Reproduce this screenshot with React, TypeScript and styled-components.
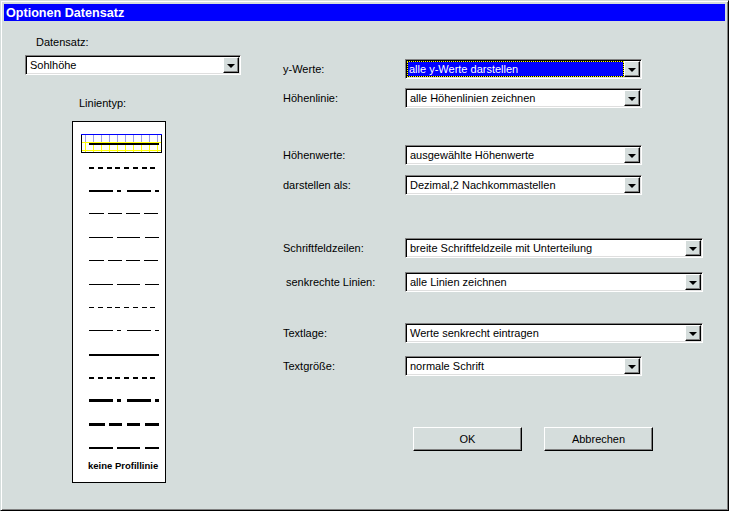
import React from "react";
import styled, { createGlobalStyle } from "styled-components";

const Global = createGlobalStyle`
  html, body { margin: 0; padding: 0; background: #d5dddc; }
  body {
    font-family: "Liberation Sans", Arial, sans-serif;
    font-size: 11px;
    color: #000;
  }
`;

const FACE = "#d5dddc";

const Window = styled.div`
  width: 729px;
  height: 511px;
  box-sizing: border-box;
  background: ${FACE};
  border: 1px solid;
  border-color: ${FACE} #000 #000 ${FACE};
  box-shadow: inset 1px 1px #fff, inset -1px -1px #808080;
  padding: 3px;
  display: flex;
  flex-direction: column;
`;

const TitleBar = styled.div`
  height: 17px;
  background: #0000ff;
  color: #fff;
  font-weight: bold;
  font-size: 12.6px;
  display: flex;
  align-items: center;
  padding-left: 2px;
  flex-shrink: 0;
`;

const Body = styled.div`
  flex: 1;
  display: flex;
`;

const LeftColumn = styled.div`
  width: 278px;
  padding-top: 15px;
  display: flex;
  flex-direction: column;
  align-items: flex-start;
`;

const SmallLabel = styled.div<{ $left: number; $top?: number }>`
  line-height: 13px;
  margin-left: ${(p) => p.$left}px;
  margin-top: ${(p) => p.$top ?? 0}px;
  white-space: nowrap;
`;

const ComboSlot = styled.div`
  margin-left: 21px;
  margin-top: 6px;
`;

const ComboField = styled.div<{ $width: number }>`
  width: ${(p) => p.$width}px;
  height: 20px;
  box-sizing: border-box;
  background: #fff;
  border: 1px solid;
  border-color: #808080 #fff #fff #808080;
  box-shadow: inset 1px 1px #000, inset -1px -1px #dfdfdf;
  padding: 1px;
  display: flex;
  align-items: stretch;
`;

const ComboValue = styled.div<{ $selected?: boolean }>`
  flex: 1;
  min-width: 0;
  line-height: 16px;
  white-space: nowrap;
  overflow: hidden;
  box-sizing: border-box;
  padding-left: ${(p) => (p.$selected ? 1 : 2)}px;
  background: ${(p) => (p.$selected ? "#0000ff" : "transparent")};
  color: ${(p) => (p.$selected ? "#fff" : "#000")};
  border: 1px solid ${(p) => (p.$selected ? "#000" : "transparent")};
  outline: ${(p) => (p.$selected ? "1px dotted #ffff00" : "none")};
  outline-offset: -1px;
  display: flex;
  align-items: center;
`;

const DropButton = styled.div`
  width: 16px;
  height: 16px;
  box-sizing: border-box;
  background: ${FACE};
  border: 1px solid;
  border-color: #fff #000 #000 #fff;
  box-shadow: inset -1px -1px #808080;
  display: flex;
  align-items: center;
  justify-content: center;
  flex-shrink: 0;
`;

const Arrow = styled.div`
  width: 0;
  height: 0;
  border-left: 4px solid transparent;
  border-right: 4px solid transparent;
  border-top: 4px solid #000;
  margin-top: 1px;
`;

const ListBox = styled.div`
  margin-left: 68px;
  margin-top: 11px;
  width: 94px;
  height: 362px;
  box-sizing: border-box;
  border: 1px solid #000;
  background: #fff;
  padding-top: 10px;
  display: flex;
  flex-direction: column;
`;

const LineItem = styled.div`
  height: 23.4px;
  display: flex;
  align-items: center;
  padding-left: 8px;
`;

const NoLine = styled.div`
  margin-top: 1px;
  margin-left: 15px;
  line-height: 12px;
  font-size: 9.5px;
  font-weight: bold;
  white-space: nowrap;
`;

const RightColumn = styled.div`
  flex: 1;
  padding-top: 38px;
  display: flex;
  flex-direction: column;
`;

const FieldRow = styled.div<{ $top: number }>`
  display: flex;
  align-items: center;
  margin-top: ${(p) => p.$top}px;
`;

const FieldLabel = styled.div<{ $indent?: boolean }>`
  width: 123px;
  box-sizing: border-box;
  padding-left: ${(p) => (p.$indent ? 4 : 1)}px;
  line-height: 13px;
  white-space: nowrap;
`;

const ButtonRow = styled.div`
  display: flex;
  gap: 22px;
  margin-top: 51px;
  padding-left: 131px;
`;

const PushButton = styled.button`
  width: 109px;
  height: 24px;
  box-sizing: border-box;
  background: ${FACE};
  border: 1px solid;
  border-color: #fff #000 #000 #fff;
  box-shadow: inset -1px -1px #808080;
  font-family: "Liberation Sans", Arial, sans-serif;
  font-size: 11px;
  color: #000;
  padding: 0;
`;

type Spec = { w: number; dash?: string };

const lines: Spec[] = [
  { w: 2 },
  { w: 2, dash: "5 3.75" },
  { w: 2, dash: "24 4 4 6" },
  { w: 1, dash: "15 4 13.5 4.5 13.5 4.5 14" },
  { w: 1, dash: "23.7 4.3 23 5 14" },
  { w: 1, dash: "15 4 13.5 4.5 13.5 4.5 14" },
  { w: 1, dash: "23.7 4.3 23 5 14" },
  { w: 1, dash: "5 3.75" },
  { w: 1, dash: "24 4 4 6" },
  { w: 2 },
  { w: 2, dash: "5 3.75" },
  { w: 3, dash: "24 4 4 6" },
  { w: 3, dash: "16 4 13 5 13 5 14" },
  { w: 2, dash: "23.7 4.3 23 5 14" },
];

function LineSample({ spec, selected }: { spec: Spec; selected: boolean }) {
  const y = spec.w === 2 ? 10 : 9.5;
  const grid: number[] = [];
  for (let x = 4; x <= 76; x += 8) grid.push(x);
  return (
    <svg width={81} height={19} viewBox="0 0 81 19" shapeRendering="crispEdges">
      {selected && (
        <g>
          <rect x={0} y={0} width={81} height={19} fill="#fff" />
          {grid.map((x) => (
            <line key={x} x1={x + 0.5} y1={0} x2={x + 0.5} y2={19} stroke="#ffff00" strokeWidth={1} />
          ))}
          {grid.map((x) => (
            <line key={"b" + x} x1={x + 0.5} y1={1} x2={x + 0.5} y2={8} stroke="#a0a0e8" strokeWidth={1} />
          ))}
          <line x1={0} y1={8.5} x2={81} y2={8.5} stroke="#ffff00" strokeWidth={1} />
          <line x1={0} y1={16.5} x2={81} y2={16.5} stroke="#ffff00" strokeWidth={1} />
          <rect x={0.5} y={0.5} width={80} height={18} fill="none" stroke="#000" strokeWidth={1} />
          <line x1={0} y1={0.5} x2={81} y2={0.5} stroke="#0000ff" strokeWidth={1} />
        </g>
      )}
      <line
        x1={8}
        y1={y}
        x2={78}
        y2={y}
        stroke="#000"
        strokeWidth={spec.w}
        strokeDasharray={spec.dash}
      />
    </svg>
  );
}

function Combo({ width, value, selected }: { width: number; value: string; selected?: boolean }) {
  return (
    <ComboField $width={width}>
      <ComboValue $selected={selected}>{value}</ComboValue>
      <DropButton>
        <Arrow />
      </DropButton>
    </ComboField>
  );
}

const fields: { label: string; value: string; width: number; top: number; selected?: boolean; indent?: boolean }[] = [
  { label: "y-Werte:", value: "alle y-Werte darstellen", width: 237, top: 0, selected: true },
  { label: "Höhenlinie:", value: "alle Höhenlinien zeichnen", width: 237, top: 9 },
  { label: "Höhenwerte:", value: "ausgewählte Höhenwerte", width: 237, top: 37 },
  { label: "darstellen als:", value: "Dezimal,2 Nachkommastellen", width: 237, top: 10 },
  { label: "Schriftfeldzeilen:", value: "breite Schriftfeldzeile mit Unterteilung", width: 298, top: 43 },
  { label: "senkrechte Linien:", value: "alle Linien zeichnen", width: 298, top: 14, indent: true },
  { label: "Textlage:", value: "Werte senkrecht eintragen", width: 298, top: 31 },
  { label: "Textgröße:", value: "normale Schrift", width: 237, top: 13 },
];

export default function App() {
  return (
    <>
      <Global />
      <Window>
        <TitleBar>Optionen Datensatz</TitleBar>
        <Body>
          <LeftColumn>
            <SmallLabel $left={32}>Datensatz:</SmallLabel>
            <ComboSlot>
              <Combo width={216} value="Sohlhöhe" />
            </ComboSlot>
            <SmallLabel $left={75} $top={22}>Linientyp:</SmallLabel>
            <ListBox>
              {lines.map((l, i) => (
                <LineItem key={i}>
                  <LineSample spec={l} selected={i === 0} />
                </LineItem>
              ))}
              <NoLine>keine Profillinie</NoLine>
            </ListBox>
          </LeftColumn>
          <RightColumn>
            {fields.map((f) => (
              <FieldRow key={f.label} $top={f.top}>
                <FieldLabel $indent={f.indent}>{f.label}</FieldLabel>
                <Combo width={f.width} value={f.value} selected={f.selected} />
              </FieldRow>
            ))}
            <ButtonRow>
              <PushButton>OK</PushButton>
              <PushButton>Abbrechen</PushButton>
            </ButtonRow>
          </RightColumn>
        </Body>
      </Window>
    </>
  );
}
